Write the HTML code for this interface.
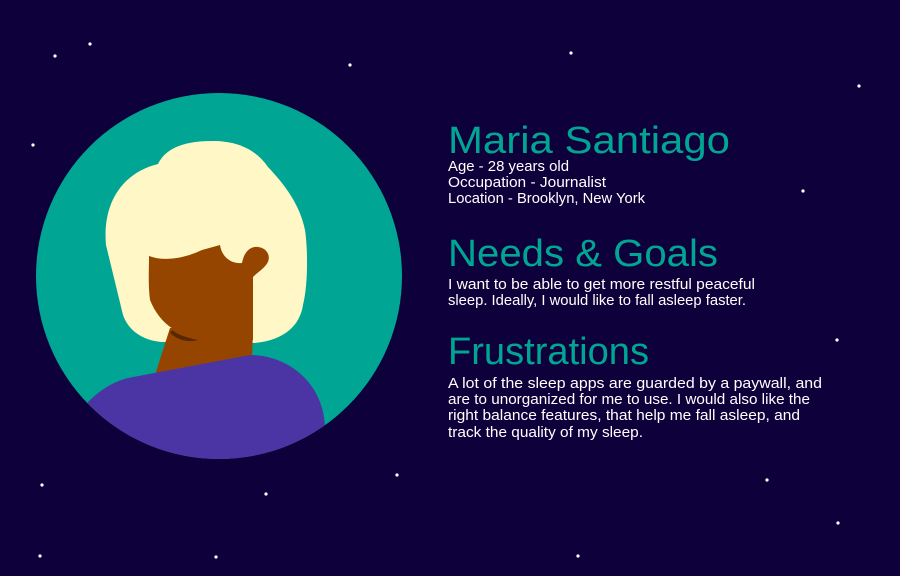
<!DOCTYPE html>
<html><head><meta charset="utf-8"><style>
html,body{margin:0;padding:0;background:#0e003a;}
svg{display:block}
text{font-family:"Liberation Sans",sans-serif;}
.h{fill:#00a693;font-size:38px;}
.b{fill:#ffffff;font-size:14.5px;}
</style></head><body>
<svg width="900" height="576" viewBox="0 0 900 576" xmlns="http://www.w3.org/2000/svg">
<rect width="900" height="576" fill="#0e003a"/>
<g fill="#fff">
<circle cx="90" cy="44" r="1.6"/><circle cx="55" cy="56" r="1.6"/><circle cx="350" cy="65" r="1.6"/><circle cx="571" cy="53" r="1.6"/><circle cx="859" cy="86" r="1.6"/><circle cx="33" cy="145" r="1.6"/><circle cx="803" cy="191" r="1.6"/><circle cx="837" cy="340" r="1.6"/><circle cx="397" cy="475" r="1.6"/><circle cx="42" cy="485" r="1.6"/><circle cx="266" cy="494" r="1.6"/><circle cx="767" cy="480" r="1.6"/><circle cx="838" cy="523" r="1.6"/><circle cx="40" cy="556" r="1.6"/><circle cx="216" cy="557" r="1.6"/><circle cx="578" cy="556" r="1.6"/>
</g>
<defs><clipPath id="c"><circle cx="219" cy="276" r="183"/></clipPath></defs>
<circle cx="219" cy="276" r="183" fill="#00a693"/>
<g clip-path="url(#c)">
<!-- hair -->
<path d="M213 141 C180 141 165 150 158 164 C125 172 102 200 106 245 L123 315 C130 335 150 342 165 342 L255 343 C285 340 300 325 303 305 C308 285 308 250 305 230 C300 205 285 185 268 167 C255 148 235 141 213 141 Z" fill="#fff8c6"/>
<!-- neck -->
<path d="M170 328 L155 375 L252 360 L253 330 Z" fill="#964500"/>
<!-- face -->
<path d="M149 256 C165 262 185 258 202 250 L220 245 C222 258 232 264 242 263 C244 252 250 246 258 247 C268 248 272 258 266 265 C262 270 258 272 253 277 L253 340 L210 340 C180 338 160 325 150 300 C148 285 149 270 149 256 Z" fill="#964500"/>
<path d="M170 333 C180 342 190 342 198 340 C188 338 178 335 172 330 Z" fill="#5a2800"/>
<!-- shirt -->
<path d="M88 402 C100 390 115 380 133 377 L250 355 C290 355 325 385 325 430 L330 480 L80 480 Z" fill="#4b35a5"/>
</g>
<text class="h" x="448" y="153" textLength="282" lengthAdjust="spacingAndGlyphs">Maria Santiago</text>
<text class="b" x="448" y="171" textLength="121" lengthAdjust="spacingAndGlyphs">Age - 28 years old</text>
<text class="b" x="448" y="187" textLength="158" lengthAdjust="spacingAndGlyphs">Occupation - Journalist</text>
<text class="b" x="448" y="203" textLength="197" lengthAdjust="spacingAndGlyphs">Location - Brooklyn, New York</text>
<text class="h" x="448" y="266" textLength="270" lengthAdjust="spacingAndGlyphs">Needs &amp; Goals</text>
<text class="b" x="448" y="289" textLength="307" lengthAdjust="spacingAndGlyphs">I want to be able to get more restful peaceful</text>
<text class="b" x="448" y="305" textLength="298" lengthAdjust="spacingAndGlyphs">sleep. Ideally, I would like to fall asleep faster.</text>
<text class="h" x="448" y="364" textLength="201" lengthAdjust="spacingAndGlyphs">Frustrations</text>
<text class="b" x="448" y="388" textLength="374" lengthAdjust="spacingAndGlyphs">A lot of the sleep apps are guarded by a paywall, and</text>
<text class="b" x="448" y="404" textLength="362" lengthAdjust="spacingAndGlyphs">are to unorganized for me to use. I would also like the</text>
<text class="b" x="448" y="420" textLength="352" lengthAdjust="spacingAndGlyphs">right balance features, that help me fall asleep, and</text>
<text class="b" x="448" y="437" textLength="195" lengthAdjust="spacingAndGlyphs">track the quality of my sleep.</text>
</svg>
</body></html>
